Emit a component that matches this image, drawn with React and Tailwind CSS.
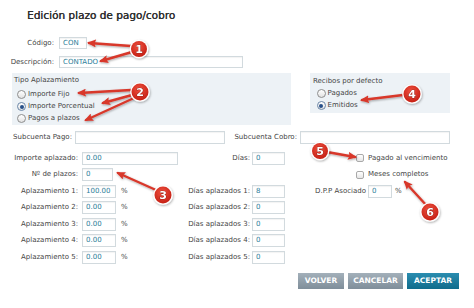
import React from "react";

function Box({ className, children }) {
  return (
    <div
      className={
        "border border-[#d2dade] bg-white flex items-center pl-[3px] text-[#2b7d99] shadow-[inset_0_1px_1px_rgba(0,0,0,0.05)] " +
        className
      }
    >
      {children}
    </div>
  );
}

function Radio({ checked }) {
  return (
    <div
      className={
        "w-[9px] h-[9px] rounded-full border flex items-center justify-center bg-linear-to-b from-white to-[#e2e2e2] " +
        (checked ? "border-[#6d88a8]" : "border-[#8e8e8e]")
      }
    >
      {checked && <div className="w-[4px] h-[4px] rounded-full bg-[#27508a]" />}
    </div>
  );
}

function Check() {
  return (
    <div className="w-[8px] h-[8px] rounded-[2px] border border-[#a9a9a9] bg-linear-to-b from-white to-[#e6e6e6]" />
  );
}

function Row({ children, className = "" }) {
  return <div className={"flex items-center h-[16.5px] " + className}>{children}</div>;
}

const arrows = [
  [131, 46, 89, 43],
  [132, 52, 101, 61],
  [131, 90, 79, 93],
  [132, 95, 103, 103],
  [134, 98, 86, 120],
  [156, 190, 118, 173],
  [403, 95, 362, 100],
  [327, 152, 355, 157],
  [427, 206, 405, 182],
];

const badges = [
  [139, 49, 8, "1"],
  [140, 92, 8.5, "2"],
  [163, 195, 8.5, "3"],
  [412, 94, 8.5, "4"],
  [320, 151, 8, "5"],
  [430, 212, 8.5, "6"],
];

function Overlay() {
  return (
    <svg
      className="absolute inset-0 pointer-events-none"
      width="474"
      height="308"
      viewBox="0 0 474 308"
    >
      <defs>
        <marker
          id="ah"
          markerUnits="userSpaceOnUse"
          markerWidth="9"
          markerHeight="8"
          refX="7"
          refY="4"
          orient="auto"
        >
          <path d="M0,0 L9,4 L0,8 L1.5,4 z" fill="#d8372b" />
        </marker>
        <radialGradient id="bg" cx="0.45" cy="0.35" r="0.7">
          <stop offset="0" stopColor="#f0503f" />
          <stop offset="1" stopColor="#c21d12" />
        </radialGradient>
        <filter id="sh" x="-30%" y="-30%" width="160%" height="160%">
          <feDropShadow dx="0.6" dy="1" stdDeviation="0.8" floodColor="#000" floodOpacity="0.35" />
        </filter>
      </defs>
      <g filter="url(#sh)">
        {arrows.map(([x1, y1, x2, y2], i) => (
          <line
            key={i}
            x1={x1}
            y1={y1}
            x2={x2}
            y2={y2}
            stroke="#d8372b"
            strokeWidth="2.4"
            strokeLinecap="round"
            markerEnd="url(#ah)"
          />
        ))}
      </g>
      {badges.map(([cx, cy, r, t]) => (
        <g key={t} filter="url(#sh)">
          <circle cx={cx} cy={cy} r={r + 1.3} fill="#ffffff" />
          <circle cx={cx} cy={cy} r={r} fill="url(#bg)" />
          <text
            x={cx}
            y={cy + 3.8}
            textAnchor="middle"
            fontFamily="DejaVu Sans, sans-serif"
            fontWeight="bold"
            fontSize="11"
            fill="#ffffff"
            stroke="#7a160e"
            strokeWidth="0.7"
            paintOrder="stroke"
          >
            {t}
          </text>
        </g>
      ))}
    </svg>
  );
}

export default function App() {
  return (
    <div className="w-[474px] h-[308px] bg-white relative overflow-hidden font-['DejaVu_Sans',sans-serif] text-[7px] leading-none text-[#454545]">
      <div className="pt-[10px] pl-[27px] h-[20px] text-[10.5px] text-[#2e2e2e] [text-shadow:0.3px_0_0_#2e2e2e]">
        Edición plazo de pago/cobro
      </div>

      <div className="mt-[17px] flex items-center h-[12px]">
        <div className="w-[54px] text-right">Código:</div>
        <Box className="ml-[5px] w-[28px] h-[12px]">CON</Box>
      </div>
      <div className="mt-[7px] flex items-center h-[12px]">
        <div className="w-[54px] text-right">Descripción:</div>
        <Box className="ml-[5px] w-[184px] h-[12px]">CONTADO</Box>
      </div>

      <div className="mt-[5px] flex items-start">
        <div className="ml-[12px] w-[279px] h-[52px] bg-[#edf2f6] pt-[4px] pl-[2px]">
          <div>Tipo Aplazamiento</div>
          <div className="mt-[4.5px] pl-[3px]">
            <div className="flex items-center h-[12px] gap-[2px]">
              <Radio />
              <span>Importe Fijo</span>
            </div>
            <div className="flex items-center h-[12px] gap-[2px]">
              <Radio checked />
              <span>Importe Porcentual</span>
            </div>
            <div className="flex items-center h-[12px] gap-[2px]">
              <Radio />
              <span>Pagos a plazos</span>
            </div>
          </div>
        </div>
        <div className="ml-[19px] w-[140px] h-[40px] bg-[#edf2f6] pt-[4.5px] pl-[3px]">
          <div>Recibos por defecto</div>
          <div className="mt-[3px] pl-[3.5px]">
            <div className="flex items-center h-[12px] gap-[2px]">
              <Radio />
              <span>Pagados</span>
            </div>
            <div className="flex items-center h-[12px] gap-[2px]">
              <Radio checked />
              <span>Emitidos</span>
            </div>
          </div>
        </div>
      </div>

      <div className="mt-[6px] flex items-center h-[13px]">
        <div className="w-[72px] text-right">Subcuenta Pago:</div>
        <Box className="ml-[3px] w-[150px] h-[13px]" />
        <div className="w-[72px] text-right">Subcuenta Cobro:</div>
        <Box className="ml-[3px] w-[150px] h-[13px]" />
      </div>

      <div className="mt-[6px] flex items-start">
        <div className="w-[185px]">
          <Row>
            <div className="w-[78px] text-right">Importe aplazado:</div>
            <Box className="ml-[4px] w-[96px] h-[13px]">0.00</Box>
          </Row>
          <Row>
            <div className="w-[78px] text-right">Nº de plazos:</div>
            <Box className="ml-[4px] w-[31px] h-[13px]">0</Box>
          </Row>
          {["100.00", "0.00", "0.00", "0.00", "0.00"].map((v, i) => (
            <Row key={i}>
              <div className="w-[78px] text-right">Aplazamiento {i + 1}:</div>
              <Box className="ml-[4px] w-[34px] h-[13px]">{v}</Box>
              <span className="ml-[5px]">%</span>
            </Row>
          ))}
        </div>

        <div className="w-[100px]">
          <Row>
            <div className="w-[65px] text-right">Días:</div>
            <Box className="ml-[2px] w-[33px] h-[13px]">0</Box>
          </Row>
          <Row />
          {["8", "0", "0", "0", "0"].map((v, i) => (
            <Row key={i}>
              <div className="w-[65px] text-right">Días aplazados {i + 1}:</div>
              <Box className="ml-[2px] w-[33px] h-[13px]">{v}</Box>
            </Row>
          ))}
        </div>

        <div className="flex-1">
          <Row>
            <div className="ml-[71px]">
              <Check />
            </div>
            <span className="ml-[4px]">Pagado al vencimiento</span>
          </Row>
          <Row>
            <div className="ml-[71px]">
              <Check />
            </div>
            <span className="ml-[4px]">Meses completos</span>
          </Row>
          <Row>
            <div className="w-[81px] text-right">D.P.P Asociado</div>
            <Box className="ml-[2px] w-[24px] h-[13px]">0</Box>
            <span className="ml-[3px]">%</span>
          </Row>
        </div>
      </div>

      <div className="mt-[7.5px] flex justify-end pr-[15px] gap-[4px]">
        <div className="w-[46px] h-[16px] flex items-center justify-center bg-linear-to-b from-[#a3b0ba] to-[#7f8e9a] text-white font-bold text-[7.5px]">
          VOLVER
        </div>
        <div className="w-[55px] h-[16px] flex items-center justify-center bg-linear-to-b from-[#a3b0ba] to-[#7f8e9a] text-white font-bold text-[7.5px]">
          CANCELAR
        </div>
        <div className="w-[52px] h-[16px] flex items-center justify-center bg-linear-to-b from-[#2a8db0] to-[#0f6c8c] text-white font-bold text-[7.5px]">
          ACEPTAR
        </div>
      </div>

      <Overlay />
    </div>
  );
}
